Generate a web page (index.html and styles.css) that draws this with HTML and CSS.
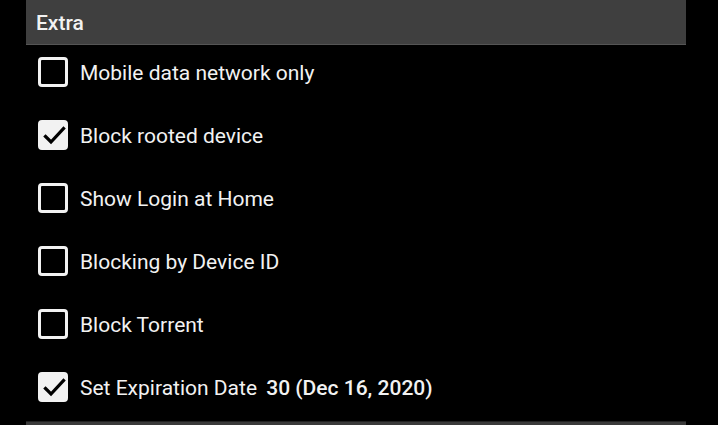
FILE: index.html
```html
<!DOCTYPE html>
<html>
<head>
<meta charset="utf-8">
<link rel="stylesheet" href="styles.css">
</head>
<body>
<div class="panel">
  <div class="header">Extra</div>
  <div class="list">
    <div class="row"><span class="box"></span><span class="label">Mobile data network only</span></div>
    <div class="row"><span class="box checked"><svg viewBox="0 0 30 30" width="30" height="30"><path d="M7.5 16.5 L13 22 L25.5 8.5" fill="none" stroke="#000" stroke-width="3.2" stroke-linecap="square"/></svg></span><span class="label">Block rooted device</span></div>
    <div class="row"><span class="box"></span><span class="label">Show Login at Home</span></div>
    <div class="row"><span class="box"></span><span class="label">Blocking by Device ID</span></div>
    <div class="row"><span class="box"></span><span class="label">Block Torrent</span></div>
    <div class="row"><span class="box checked"><svg viewBox="0 0 30 30" width="30" height="30"><path d="M7.5 16.5 L13 22 L25.5 8.5" fill="none" stroke="#000" stroke-width="3.2" stroke-linecap="square"/></svg></span><span class="label">Set Expiration Date <b class="value">30 (Dec 16, 2020)</b></span></div>
  </div>
  <div class="footer"></div>
</div>
</body>
</html>
```
FILE: styles.css
```css
html, body {
  margin: 0;
  padding: 0;
  background: #000;
  height: 100%;
  overflow: hidden;
}
body {
  font-family: Roboto, "Noto Sans", sans-serif;
  color: #f2f2f2;
}
.panel {
  margin: 0 32px 0 26px;
}
.header {
  height: 45px;
  background: #3f3f3f;
  box-sizing: border-box;
  padding: 1px 0 0 10px;
  font-size: 21px;
  font-weight: 500;
  line-height: 44px;
  border-bottom: 1px solid #555;
}
.list {
  display: flex;
  flex-direction: column;
  gap: 33px;
  padding: 12px 0 0 12px;
}
.row {
  display: flex;
  align-items: center;
  height: 30px;
  gap: 12px;
}
.box {
  width: 30px;
  height: 30px;
  box-sizing: border-box;
  border: 3px solid #f2f2f2;
  border-radius: 4px;
  flex: none;
  position: relative;
}
.box.checked {
  background: #f2f2f2;
}
.box svg {
  position: absolute;
  left: -3px;
  top: -3px;
}
.label {
  font-size: 21px;
  line-height: 30px;
  white-space: nowrap;
  position: relative;
  top: 1px;
}
.value {
  font-weight: 500;
  margin-left: 4px;
}
.footer {
  margin-top: 19px;
  height: 3px;
  background: #3a3a3a;
  border-top: 1px solid #222;
}
```
